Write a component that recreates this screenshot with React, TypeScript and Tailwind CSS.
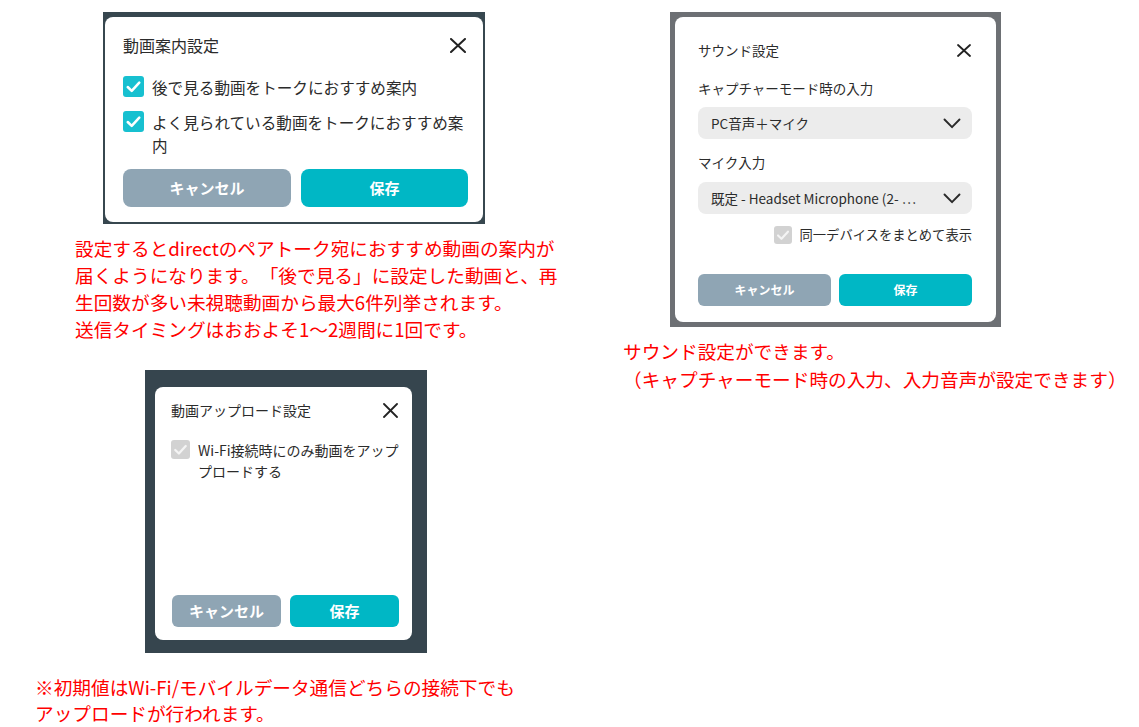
import React from "react";

function CheckBox({ size, color, stroke = "#ffffff" }: { size: number; color: string; stroke?: string }) {
  return (
    <div
      className="shrink-0 rounded-[3px] flex items-center justify-center"
      style={{ width: size, height: size, background: color }}
    >
      <svg width={size} height={size} viewBox="0 0 20 20">
        <polyline points="4.5,10.5 8.3,14.2 15.5,6.3" fill="none" stroke={stroke} strokeWidth="2.4" strokeLinecap="round" strokeLinejoin="round" />
      </svg>
    </div>
  );
}

function CloseX({ w, h, sw = 1.8 }: { w: number; h: number; sw?: number }) {
  return (
    <svg width={w} height={h} viewBox={`0 0 ${w} ${h}`} className="shrink-0">
      <line x1="1" y1="1" x2={w - 1} y2={h - 1} stroke="#222" strokeWidth={sw} strokeLinecap="round" />
      <line x1={w - 1} y1="1" x2="1" y2={h - 1} stroke="#222" strokeWidth={sw} strokeLinecap="round" />
    </svg>
  );
}

function Chevron() {
  return (
    <svg width="18" height="11" viewBox="0 0 18 11" className="shrink-0">
      <polyline points="1.5,1.5 9,9.2 16.5,1.5" fill="none" stroke="#2a2a2a" strokeWidth="1.9" strokeLinecap="round" strokeLinejoin="round" />
    </svg>
  );
}

function VideoGuideDialog() {
  return (
    <div className="w-[382px] h-[212px] bg-[#37474f] pt-[5px] px-[2px] pb-[2px] flex">
      <div className="flex-1 bg-white rounded-[8px] pl-[18px] pr-[15px] pt-[16px] flex flex-col text-[#2b2b2b]">
        <div className="h-[24px] flex items-center justify-between pr-[2px]">
          <span className="text-[16px] leading-[24px]">動画案内設定</span>
          <CloseX w={16} h={15} sw={2} />
        </div>
        <div className="mt-[19px] flex items-start gap-[8px]">
          <CheckBox size={21} color="#17c0d0" />
          <span className="text-[15.6px] leading-[23px] whitespace-nowrap">後で見る動画をトークにおすすめ案内</span>
        </div>
        <div className="mt-[12px] flex items-start gap-[8px]">
          <CheckBox size={21} color="#17c0d0" />
          <span className="text-[15.6px] leading-[23px] whitespace-nowrap">
            よく見られている動画をトークにおすすめ案
            <br />内
          </span>
        </div>
        <div className="mt-[12px] flex gap-[10px]">
          <div className="w-[168px] h-[38px] rounded-[8px] bg-[#8fa5b4] text-white font-bold text-[15px] flex items-center justify-center">
            キャンセル
          </div>
          <div className="w-[167px] h-[38px] rounded-[8px] bg-[#00b7c5] text-white font-bold text-[15px] flex items-center justify-center">
            保存
          </div>
        </div>
      </div>
    </div>
  );
}

function SoundDialog() {
  return (
    <div className="w-[331px] h-[315px] bg-[#6d7074] p-[5px] flex">
      <div className="flex-1 bg-white rounded-[8px] pl-[23px] pr-[24px] pt-[23px] flex flex-col text-[#2b2b2b]">
        <div className="h-[20px] flex items-center justify-between pr-[1px]">
          <span className="text-[13.5px] leading-[20px]">サウンド設定</span>
          <CloseX w={14} h={13} sw={1.8} />
        </div>
        <div className="mt-[18px] text-[13.5px] leading-[20px]">キャプチャーモード時の入力</div>
        <div className="mt-[9px] h-[32px] rounded-[8px] bg-[#ececec] pl-[13px] pr-[11px] flex items-center justify-between">
          <span className="text-[13.5px]">PC音声＋マイク</span>
          <Chevron />
        </div>
        <div className="mt-[13px] text-[13.5px] leading-[20px]">マイク入力</div>
        <div className="mt-[10px] h-[32px] rounded-[8px] bg-[#ececec] pl-[13px] pr-[11px] flex items-center justify-between">
          <span className="text-[13.5px] whitespace-nowrap">既定 - Headset Microphone (2- ⋯</span>
          <Chevron />
        </div>
        <div className="mt-[11px] h-[20px] flex items-center justify-end gap-[8px]">
          <CheckBox size={18} color="#d2d2d2" stroke="#f4f4f4" />
          <span className="text-[13.3px] leading-[20px]">同一デバイスをまとめて表示</span>
        </div>
        <div className="mt-[29px] flex gap-[8px]">
          <div className="w-[133px] h-[32px] rounded-[6px] bg-[#8fa5b4] text-white font-bold text-[12px] flex items-center justify-center">
            キャンセル
          </div>
          <div className="w-[133px] h-[32px] rounded-[6px] bg-[#00b7c5] text-white font-bold text-[12px] flex items-center justify-center">
            保存
          </div>
        </div>
      </div>
    </div>
  );
}

function UploadDialog() {
  return (
    <div className="w-[282px] h-[283px] bg-[#36454e] pt-[17px] pl-[10px] pr-[15px] pb-[13px] flex">
      <div className="flex-1 bg-white rounded-[8px] pl-[17px] pr-[13px] pt-[13px] pb-[13px] flex flex-col text-[#2b2b2b]">
        <div className="h-[20px] flex items-center justify-between pr-[1px]">
          <span className="text-[14px] leading-[20px] -ml-[1px]">動画アップロード設定</span>
          <CloseX w={15} h={15} sw={1.8} />
        </div>
        <div className="mt-[20px] flex items-start gap-[8px] -ml-[1px]">
          <CheckBox size={19} color="#d2d2d2" stroke="#f4f4f4" />
          <span className="text-[14px] leading-[20.5px] whitespace-nowrap">
            Wi-Fi接続時にのみ動画をアップ
            <br />プロードする
          </span>
        </div>
        <div className="mt-auto flex gap-[9px]">
          <div className="w-[109px] h-[32px] rounded-[6px] bg-[#8fa5b4] text-white font-bold text-[15px] flex items-center justify-center">
            キャンセル
          </div>
          <div className="w-[109px] h-[32px] rounded-[6px] bg-[#00b7c5] text-white font-bold text-[15px] flex items-center justify-center">
            保存
          </div>
        </div>
      </div>
    </div>
  );
}

export default function App() {
  return (
    <div className="w-[1139px] h-[727px] bg-white overflow-hidden flex [text-spacing-trim:space-all] font-['Noto_Sans_CJK_JP','Noto_Sans',sans-serif]">
      <div className="w-[610px] shrink-0 flex flex-col items-start">
        <div className="ml-[103px] mt-[12px]">
          <VideoGuideDialog />
        </div>
        <div className="ml-[75px] mt-[10px] text-[18.67px] leading-[27px] text-[#ff0000] whitespace-nowrap">
          設定するとdirectのペアトーク宛におすすめ動画の案内が
          <br />
          届くようになります。「後で見る」に設定した動画と、再
          <br />
          生回数が多い未視聴動画から最大6件列挙されます。
          <br />
          送信タイミングはおおよそ1〜2週間に1回です。
        </div>
        <div className="ml-[145px] mt-[28px]">
          <UploadDialog />
        </div>
        <div className="ml-[35px] mt-[21px] text-[18.67px] leading-[26px] text-[#ff0000] whitespace-nowrap">
          ※初期値はWi-Fi/モバイルデータ通信どちらの接続下でも
          <br />
          アップロードが行われます。
        </div>
      </div>
      <div className="flex-1 flex flex-col items-start">
        <div className="ml-[60px] mt-[12px]">
          <SoundDialog />
        </div>
        <div className="ml-[13px] mt-[10px] text-[18.67px] leading-[28px] text-[#ff0000] whitespace-nowrap">
          サウンド設定ができます。
          <br />
          （キャプチャーモード時の入力、入力音声が設定できます）
        </div>
      </div>
    </div>
  );
}
